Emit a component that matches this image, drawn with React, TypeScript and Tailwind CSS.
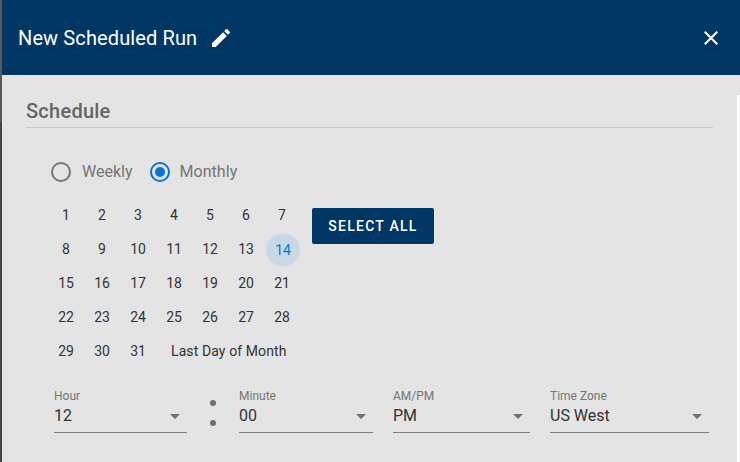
const weeks = [
  ["1", "2", "3", "4", "5", "6", "7"],
  ["8", "9", "10", "11", "12", "13", "14"],
  ["15", "16", "17", "18", "19", "20", "21"],
  ["22", "23", "24", "25", "26", "27", "28"],
  ["29", "30", "31"],
];

function Select({ label, value, width }: { label: string; value: string; width: string }) {
  return (
    <div className={`${width} flex flex-col border-b border-[#808080] h-[45px] shrink-0`}>
      <div className="text-[12px] leading-[14px] text-[#757575] mt-[1px]">{label}</div>
      <div className="flex items-center justify-between mt-[2px]">
        <span className="text-[16px] leading-[22px] text-[#333333]">{value}</span>
        <svg width="10" height="5" viewBox="0 0 10 5" className="mr-[7px]">
          <path d="M0 0h10L5 5z" fill="#6f6f6f" />
        </svg>
      </div>
    </div>
  );
}

export default function App() {
  return (
    <div className="w-[740px] h-[462px] flex overflow-hidden font-['Roboto',sans-serif]">
      <div className="w-[2px] shrink-0 flex flex-col">
        <div className="h-[122px] bg-[#595959]" />
        <div className="flex-1 bg-[#454545]" />
      </div>
      <div className="w-[738px] h-full flex flex-col bg-[#e4e4e4]">
        <header className="h-[75px] shrink-0 bg-[#003764] flex items-center pl-[16px] pr-[17px] text-white">
          <span className="text-[20px] font-normal tracking-[0.12px]">New Scheduled Run</span>
          <svg width="24" height="24" viewBox="0 0 24 24" fill="white" className="ml-[12px]">
            <path d="M3 17.25V21h3.75L17.81 9.94l-3.75-3.75L3 17.25zM20.71 7.04a1 1 0 0 0 0-1.41l-2.34-2.34a1 1 0 0 0-1.41 0l-1.83 1.83 3.75 3.75 1.83-1.83z" />
          </svg>
          <svg width="24" height="24" viewBox="0 0 24 24" fill="white" className="ml-auto">
            <path d="M19 6.41 17.59 5 12 10.59 6.41 5 5 6.41 10.59 12 5 17.59 6.41 19 12 13.41 17.59 19 19 17.59 13.41 12z" />
          </svg>
        </header>
        <div className="flex flex-1 min-h-0">
          <main className="flex-1 flex flex-col px-[24px]">
            <div className="w-[687px] mt-[24px] border-b border-[#c8c8c8] h-[29px] text-[20px] leading-[25px] font-medium tracking-[0.25px] text-[#666666]">
              Schedule
            </div>
            <div className="flex items-center mt-[30px] ml-[25px] h-[28px] text-[16px] text-[#757575]">
              <span className="w-[20px] h-[20px] rounded-full border-2 border-[#757575]" />
              <span className="ml-[11px]">Weekly</span>
              <span className="ml-[17px] w-[20px] h-[20px] rounded-full border-2 border-[#0a74d6] flex items-center justify-center">
                <span className="w-[10px] h-[10px] rounded-full bg-[#0a74d6]" />
              </span>
              <span className="ml-[10px] tracking-[0.05px]">Monthly</span>
            </div>
            <div className="flex mt-[12px] ml-[22px]">
              <div className="flex flex-col w-[252px]">
                {weeks.map((w, i) => (
                  <div key={i} className="flex h-[34px] items-center text-[14px] text-[#333333]">
                    {w.map((d) => (
                      <div
                        key={d}
                        className={
                          d === "14"
                            ? "w-[34px] h-[32px] ml-[2px] self-end rounded-full bg-[#c9d8e6] text-[#0a74d6] flex items-center justify-center"
                            : "w-[36px] flex justify-center"
                        }
                      >
                        {d}
                      </div>
                    ))}
                    {i === 4 && (
                      <span className="ml-[15px] whitespace-nowrap tracking-[0.1px]">Last Day of Month</span>
                    )}
                  </div>
                ))}
              </div>
              <button className="ml-[12px] mt-[10px] w-[122px] h-[36px] rounded-[2px] bg-[#003764] text-white text-[14px] font-medium tracking-[1.25px]">
                SELECT ALL
              </button>
            </div>
            <div className="flex items-start mt-[20px] ml-[28px]">
              <Select label="Hour" value="12" width="w-[133px]" />
              <div className="w-[52px] h-[45px] flex flex-col items-center pt-[12px] gap-[14px]">
                <span className="w-[6px] h-[6px] rounded-full bg-[#6f6f6f]" />
                <span className="w-[6px] h-[6px] rounded-full bg-[#6f6f6f]" />
              </div>
              <Select label="Minute" value="00" width="w-[134px]" />
              <div className="w-[20px]" />
              <Select label="AM/PM" value="PM" width="w-[137px]" />
              <div className="w-[20px]" />
              <Select label="Time Zone" value="US West" width="w-[159px]" />
            </div>
          </main>
          <div className="w-[3px] mt-[20px] bg-white shrink-0" />
        </div>
      </div>
    </div>
  );
}
